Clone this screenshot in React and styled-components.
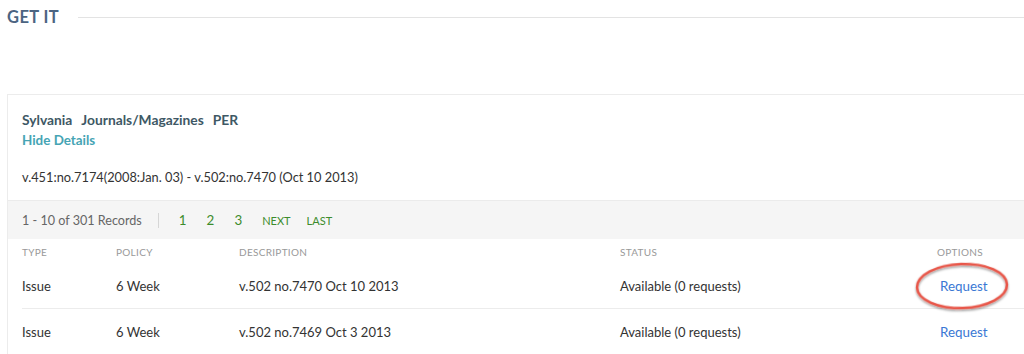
import React from 'react'
import styled, { createGlobalStyle } from 'styled-components'

const Global = createGlobalStyle`
  body {
    margin: 0;
    background: #fff;
    font-family: Lato, "Open Sans", sans-serif;
    color: #333;
  }
`

const Page = styled.div`
  padding: 8px 0 0 7px;
  width: 1017px;
  height: 346px;
  overflow: hidden;
`

const SectionHead = styled.div`
  display: flex;
  align-items: center;
  gap: 19px;
  height: 18px;
`

const SectionTitle = styled.h2`
  margin: 0;
  font-size: 16.5px;
  font-weight: 700;
  letter-spacing: 0.4px;
  color: #4b6482;
  white-space: nowrap;
`

const Rule = styled.div`
  flex: 1;
  height: 1px;
  background: #e3e3e3;
`

const Card = styled.div`
  margin-top: 68px;
  border-top: 1px solid #ececec;
  border-left: 1px solid #ececec;
  background: #fff;
`

const Summary = styled.div`
  padding: 15px 14px 13px;
`

const Holding = styled.div`
  display: flex;
  gap: 9px;
  font-size: 13.8px;
  font-weight: 700;
  color: #3e5865;
  line-height: 20px;
`

const Toggle = styled.a`
  display: block;
  font-size: 13.4px;
  font-weight: 700;
  color: #46a4b4;
  line-height: 20px;
  cursor: pointer;
`

const Range = styled.div`
  margin-top: 17px;
  font-size: 12.8px;
  color: #333;
  line-height: 20px;
`

const Pager = styled.div`
  display: flex;
  align-items: center;
  height: 38px;
  padding: 0 14px;
  background: #f5f5f5;
  border-top: 1px solid #ebebeb;
  font-size: 13px;
`

const Count = styled.span`
  color: #666;
  font-size: 12.6px;
`

const Divider = styled.span`
  width: 1px;
  height: 15px;
  background: #d6d6d6;
  margin: 0 20px 0 16px;
`

const PageLink = styled.a`
  color: #3c8c2c;
  font-size: ${p => (p.$word ? '11px' : '13.4px')};
  margin-right: ${p => (p.$word ? '16px' : '20px')};
  cursor: pointer;
`

const Table = styled.div`
  padding: 0 0 0 14px;
  margin-top: 2px;
`

const Row = styled.div`
  display: grid;
  grid-template-columns: 94px 123px 381px 317px 1fr;
  align-items: center;
  height: ${p => (p.$head ? '22px' : '45px')};
  border-top: ${p => (p.$ruled ? '1px solid #ececec' : 'none')};
  font-size: ${p => (p.$head ? '10px' : '13px')};
  color: ${p => (p.$head ? '#999' : '#333')};
  letter-spacing: ${p => (p.$head ? '0.3px' : '0')};
`

const Options = styled.div`
  position: relative;
  padding-left: 3px;
`

const RequestLink = styled.a`
  color: #3a78d4;
  font-size: 13.4px;
  cursor: pointer;
`

const Circle = styled.svg`
  position: absolute;
  left: -27px;
  top: -20px;
  pointer-events: none;
`

function Highlight() {
  return (
    <Circle width="104" height="58" viewBox="0 0 104 58">
      <defs>
        <filter id="sh" x="-20%" y="-20%" width="140%" height="160%">
          <feDropShadow dx="0" dy="1.5" stdDeviation="1.2" floodColor="#000" floodOpacity="0.45" />
        </filter>
      </defs>
      <ellipse cx="52" cy="28" rx="45" ry="22" fill="none" stroke="#e8574a" strokeWidth="2.5" filter="url(#sh)" transform="rotate(-2 52 28)" />
    </Circle>
  )
}

const items = [
  { type: 'Issue', policy: '6 Week', desc: 'v.502 no.7470 Oct 10 2013', status: 'Available (0 requests)', mark: true },
  { type: 'Issue', policy: '6 Week', desc: 'v.502 no.7469 Oct 3 2013', status: 'Available (0 requests)' },
]

export default function App() {
  return (
    <>
      <Global />
      <Page>
        <SectionHead>
          <SectionTitle>GET IT</SectionTitle>
          <Rule />
        </SectionHead>
        <Card>
          <Summary>
            <Holding>
              <span>Sylvania</span>
              <span>Journals/Magazines</span>
              <span>PER</span>
            </Holding>
            <Toggle>Hide Details</Toggle>
            <Range>v.451:no.7174(2008:Jan. 03) - v.502:no.7470 (Oct 10 2013)</Range>
          </Summary>
          <Pager>
            <Count>1 - 10 of 301 Records</Count>
            <Divider />
            <PageLink>1</PageLink>
            <PageLink>2</PageLink>
            <PageLink>3</PageLink>
            <PageLink $word>NEXT</PageLink>
            <PageLink $word>LAST</PageLink>
          </Pager>
          <Table>
            <Row $head>
              <span>TYPE</span>
              <span>POLICY</span>
              <span>DESCRIPTION</span>
              <span>STATUS</span>
              <span>OPTIONS</span>
            </Row>
            {items.map((it, i) => (
              <Row key={i} $ruled={i > 0}>
                <span>{it.type}</span>
                <span>{it.policy}</span>
                <span>{it.desc}</span>
                <span>{it.status}</span>
                <Options>
                  <RequestLink>Request</RequestLink>
                  {it.mark && <Highlight />}
                </Options>
              </Row>
            ))}
          </Table>
        </Card>
      </Page>
    </>
  )
}
